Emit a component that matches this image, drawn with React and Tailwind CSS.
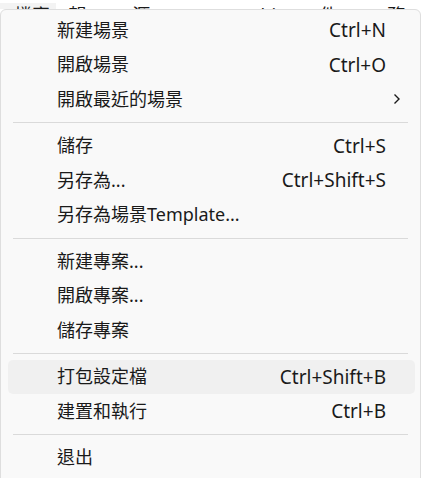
import React from "react";

const FONT = { fontFamily: '"Noto Sans", "Noto Sans CJK TC", sans-serif' };

const groups = [
  [
    { label: "新建場景", sc: "Ctrl+N" },
    { label: "開啟場景", sc: "Ctrl+O" },
    { label: "開啟最近的場景", sub: true },
  ],
  [
    { label: "儲存", sc: "Ctrl+S" },
    { label: "另存為...", sc: "Ctrl+Shift+S" },
    { label: "另存為場景Template..." },
  ],
  [
    { label: "新建專案..." },
    { label: "開啟專案..." },
    { label: "儲存專案" },
  ],
  [
    { label: "打包設定檔", sc: "Ctrl+Shift+B", hover: true },
    { label: "建置和執行", sc: "Ctrl+B" },
  ],
  [{ label: "退出" }],
];

function Item({ it }) {
  return (
    <div
      className={
        "flex items-center h-[34.5px] ml-[7px] mr-[5px] rounded-[5px] pl-[49px] text-[18px] text-[#1a1a1a] " +
        (it.sub ? "pr-[14px] " : "pr-[29px] ") +
        (it.hover ? "bg-[#f0f0f0]" : "")
      }
    >
      <span className="flex-1 whitespace-nowrap">{it.label}</span>
      {it.sc && <span className="whitespace-nowrap text-[19px]">{it.sc}</span>}
      {it.sub && (
        <svg width="8" height="12" viewBox="0 0 8 12" fill="none">
          <path d="M1.5 1.5 L6 6 L1.5 10.5" stroke="#1a1a1a" strokeWidth="1.4" />
        </svg>
      )}
    </div>
  );
}

export default function App() {
  return (
    <div className="w-[422px] h-[478px] bg-white overflow-hidden" style={FONT}>
      <div className="h-[9px] overflow-hidden flex items-end text-[18px] text-[#1a1a1a]">
        <div className="flex items-end -mb-[18px] leading-[24px]">
          <span className="w-[57px] pl-[14px] bg-[#f3f3f3]">檔案</span>
          <span className="ml-[13px]">編輯</span>
          <span className="ml-[29px]">資源</span>
          <span className="ml-[29px]">GameObject</span>
          <span className="ml-[18px]">元件</span>
          <span className="ml-[33px]">服務</span>
        </div>
      </div>
      <div className="w-[421px] h-[475px] border border-[#dedede] rounded-[6px] bg-[#f9f9f9] pt-[3px] flex flex-col">
        {groups.map((g, gi) => (
          <React.Fragment key={gi}>
            {gi > 0 && <div className="h-px bg-[#dadada] mx-[12px] my-[5.5px]" />}
            {g.map((it, i) => (
              <Item key={i} it={it} />
            ))}
          </React.Fragment>
        ))}
      </div>
    </div>
  );
}
